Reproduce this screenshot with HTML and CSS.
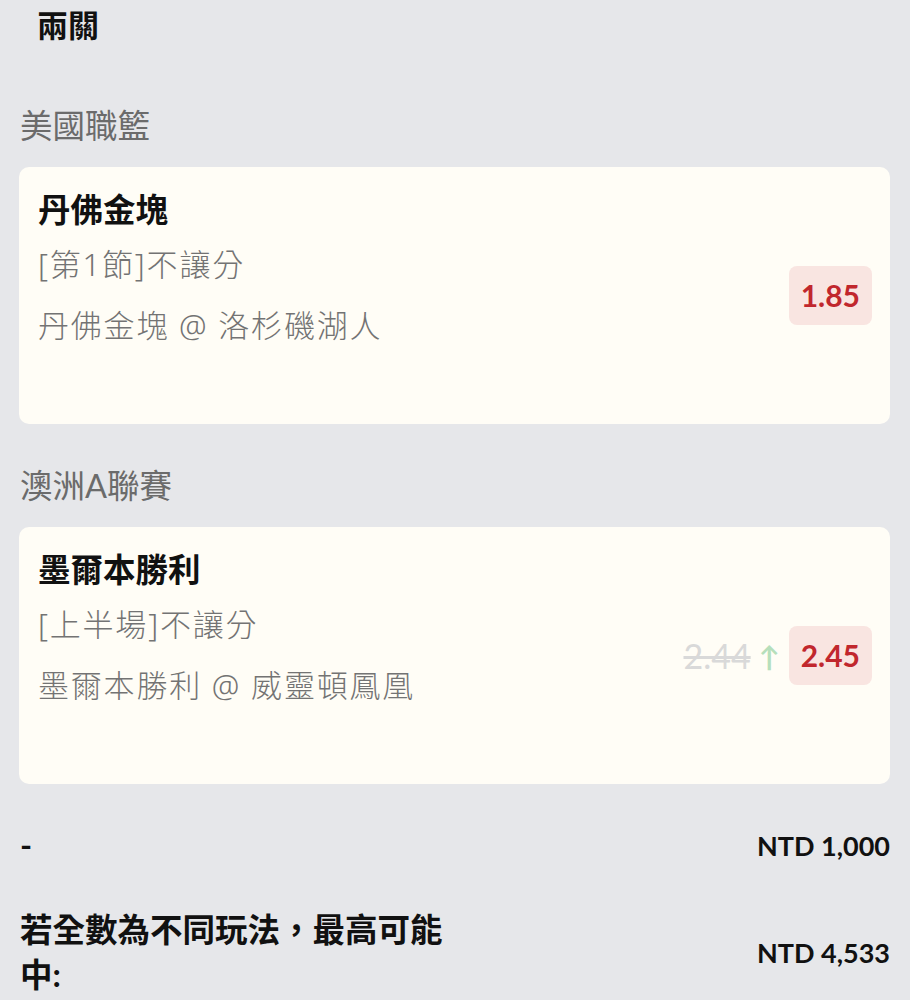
FILE: index.html
```html
<!DOCTYPE html>
<html lang="zh-TW">

<head>
    <meta charset="UTF-8">
    <meta name="viewport" content="width=device-width, initial-scale=1.0">
    <title>兩關</title>
    <link rel="stylesheet" href="styles.css">
</head>

<body>
    <h1 class="parlay-title">兩關</h1>

    <div class="league">美國職籃</div>
    <div class="bet-card">
        <div class="bet-info">
            <div class="bet-pick">丹佛金塊</div>
            <div class="bet-market">[第1節]不讓分</div>
            <div class="bet-match">丹佛金塊 @ 洛杉磯湖人</div>
        </div>
        <div class="bet-odds">
            <span class="odds-badge">1.85</span>
        </div>
    </div>

    <div class="league league-next">澳洲A聯賽</div>
    <div class="bet-card">
        <div class="bet-info">
            <div class="bet-pick">墨爾本勝利</div>
            <div class="bet-market">[上半場]不讓分</div>
            <div class="bet-match">墨爾本勝利 @ 威靈頓鳳凰</div>
        </div>
        <div class="bet-odds">
            <span class="odds-old">2.44</span>
            <span class="odds-up">↑</span>
            <span class="odds-badge">2.45</span>
        </div>
    </div>

    <div class="summary-row">
        <div class="summary-label">-</div>
        <div class="summary-value">NTD 1,000</div>
    </div>
    <div class="summary-row summary-win">
        <div class="summary-label">若全數為不同玩法，最高可能中:</div>
        <div class="summary-value">NTD 4,533</div>
    </div>
</body>

</html>
```

FILE: styles.css
```css
body {
    margin: 0;
    padding: 0 20px 0 19px;
    font-family: Lato, "Noto Sans CJK TC", sans-serif;
    background-color: #e6e7ea;
    color: #111;
}

.parlay-title {
    margin: 3px 0 0;
    padding-left: 18px;
    font-size: 31px;
    line-height: 44px;
    font-weight: bold;
}

.league {
    margin-top: 57px;
    padding-left: 1px;
    font-size: 32.5px;
    line-height: 44px;
    color: #6b6b6b;
}

.league-next {
    margin-top: 40px;
}

.bet-card {
    display: flex;
    align-items: center;
    justify-content: space-between;
    box-sizing: border-box;
    min-height: 257px;
    margin-top: 19px;
    padding: 21px 18px 21px 19px;
    background-color: #fffdf6;
    border-radius: 10px;
}

.bet-info {
    align-self: flex-start;
}

.bet-pick {
    font-size: 32.5px;
    line-height: 44px;
    font-weight: bold;
}

.bet-market,
.bet-match {
    font-family: "Noto Sans", "Noto Sans CJK TC", sans-serif;
    font-size: 31px;
    font-weight: 300;
    letter-spacing: 1.8px;
    line-height: 44px;
    color: #737373;
}

.bet-market {
    margin-top: 10px;
}

.bet-match {
    margin-top: 17px;
}

.bet-odds {
    display: flex;
    align-items: center;
}

.odds-badge {
    padding: 8px 12px;
    font-size: 30px;
    line-height: 43px;
    font-weight: bold;
    color: #c1272d;
    background-color: #f9e5e1;
    border-radius: 8px;
}

.odds-old {
    font-size: 34px;
    color: #d9d9d9;
    text-decoration: line-through;
}

.odds-up {
    margin: 0 9px 0 8px;
    font-size: 28px;
    font-weight: bold;
    color: #b6dfbb;
}

.summary-row {
    display: flex;
    align-items: center;
    justify-content: space-between;
    margin-top: 39px;
    padding-left: 1px;
    font-weight: bold;
}

.summary-label {
    font-size: 32.5px;
    line-height: 44px;
}

.summary-win .summary-label {
    width: 445px;
    line-height: 45px;
}

.summary-win {
    margin-top: 40px;
}

.summary-value {
    font-size: 27px;
}
```
